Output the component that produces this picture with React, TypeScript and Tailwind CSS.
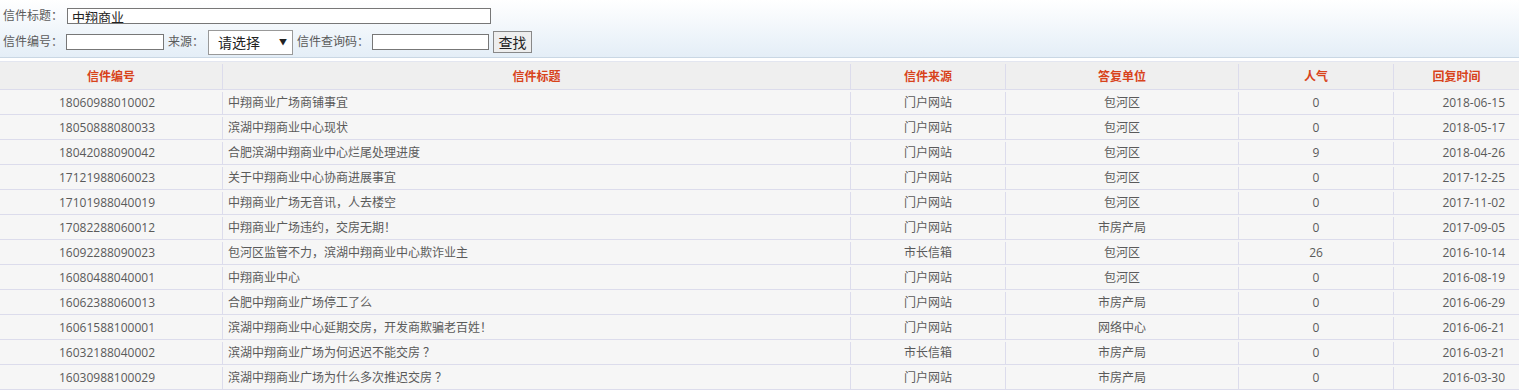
const rows = [
  ["18060988010002", "中翔商业广场商铺事宜", "门户网站", "包河区", "0", "2018-06-15"],
  ["18050888080033", "滨湖中翔商业中心现状", "门户网站", "包河区", "0", "2018-05-17"],
  ["18042088090042", "合肥滨湖中翔商业中心烂尾处理进度", "门户网站", "包河区", "9", "2018-04-26"],
  ["17121988060023", "关于中翔商业中心协商进展事宜", "门户网站", "包河区", "0", "2017-12-25"],
  ["17101988040019", "中翔商业广场无音讯，人去楼空", "门户网站", "包河区", "0", "2017-11-02"],
  ["17082288060012", "中翔商业广场违约，交房无期！", "门户网站", "市房产局", "0", "2017-09-05"],
  ["16092288090023", "包河区监管不力，滨湖中翔商业中心欺诈业主", "市长信箱", "包河区", "26", "2016-10-14"],
  ["16080488040001", "中翔商业中心", "门户网站", "包河区", "0", "2016-08-19"],
  ["16062388060013", "合肥中翔商业广场停工了么", "门户网站", "市房产局", "0", "2016-06-29"],
  ["16061588100001", "滨湖中翔商业中心延期交房，开发商欺骗老百姓！", "门户网站", "网络中心", "0", "2016-06-21"],
  ["16032188040002", "滨湖中翔商业广场为何迟迟不能交房 ？", "市长信箱", "市房产局", "0", "2016-03-21"],
  ["16030988100029", "滨湖中翔商业广场为什么多次推迟交房 ？", "门户网站", "市房产局", "0", "2016-03-30"],
];

const headers = ["信件编号", "信件标题", "信件来源", "答复单位", "人气", "回复时间"];
const widths = ["w-[223px]", "w-[628px]", "w-[155px]", "w-[233px]", "w-[155px]", ""];

export default function App() {
  return (
    <div
      className="w-[1519px] h-[392px] overflow-hidden bg-white text-[12px] text-[#5a5a5a]"
      style={{ fontFamily: '"Open Sans", "Noto Sans CJK SC", sans-serif' }}
    >
      {/* search form */}
      <div className="h-[58px] bg-gradient-to-b from-white to-[#e4eef7] border-b border-[#c9d7e4] pl-[3px]">
        <div className="flex items-center h-[30px] pt-[2px]">
          <span>信件标题：</span>
          <input
            defaultValue="中翔商业"
            className="ml-[4px] w-[424px] h-[16px] border border-[#777] bg-white px-[4px] text-[13px] text-[#222] leading-none outline-none"
          />
        </div>
        <div className="flex items-center h-[24px]">
          <span>信件编号：</span>
          <input className="ml-[3px] w-[98px] h-[16px] border border-[#777] bg-white outline-none" />
          <span className="ml-[4px]">来源：</span>
          <div className="ml-[4px] w-[85px] h-[25px] border border-[#999] bg-white flex items-center justify-between pl-[9px] pr-[5px] text-[14px] text-[#222]">
            <span>请选择</span>
            <span className="text-[8px]">▼</span>
          </div>
          <span className="ml-[4px]">信件查询码：</span>
          <input className="ml-[3px] w-[117px] h-[16px] border border-[#777] bg-white outline-none" />
          <button className="ml-[4px] w-[39px] h-[22px] border border-[#888] bg-[#eee] text-[14px] text-[#222]">
            查找
          </button>
        </div>
      </div>

      {/* result table */}
      <div className="mt-[3px] border-t border-[#e3e6f0]">
        <div className="flex h-[28px] pt-[2px] bg-[#efefef] border-b border-[#dcdcec] text-[#d8431b] font-bold">
          {headers.map((h, i) => (
            <div
              key={h}
              className={`${widths[i] || "flex-1"} flex items-center justify-center ${i < 5 ? "border-r border-[#dcdcec]" : ""}`}
            >
              {h}
            </div>
          ))}
        </div>
        {rows.map((r) => (
          <div key={r[0]} className="flex h-[25px] pt-[2px] bg-[#f6f6f6] border-b border-[#dcdcec]">
            <div className="w-[223px] flex items-center justify-center pr-[8px] border-r border-[#dcdcec]">{r[0]}</div>
            <div className="w-[628px] flex items-center pl-[5px] border-r border-[#dcdcec]">{r[1]}</div>
            <div className="w-[155px] flex items-center justify-center border-r border-[#dcdcec]">{r[2]}</div>
            <div className="w-[233px] flex items-center justify-center border-r border-[#dcdcec]">{r[3]}</div>
            <div className="w-[155px] flex items-center justify-center border-r border-[#dcdcec]">{r[4]}</div>
            <div className="flex-1 flex items-center justify-end pr-[14px]">{r[5]}</div>
          </div>
        ))}
      </div>
    </div>
  );
}
